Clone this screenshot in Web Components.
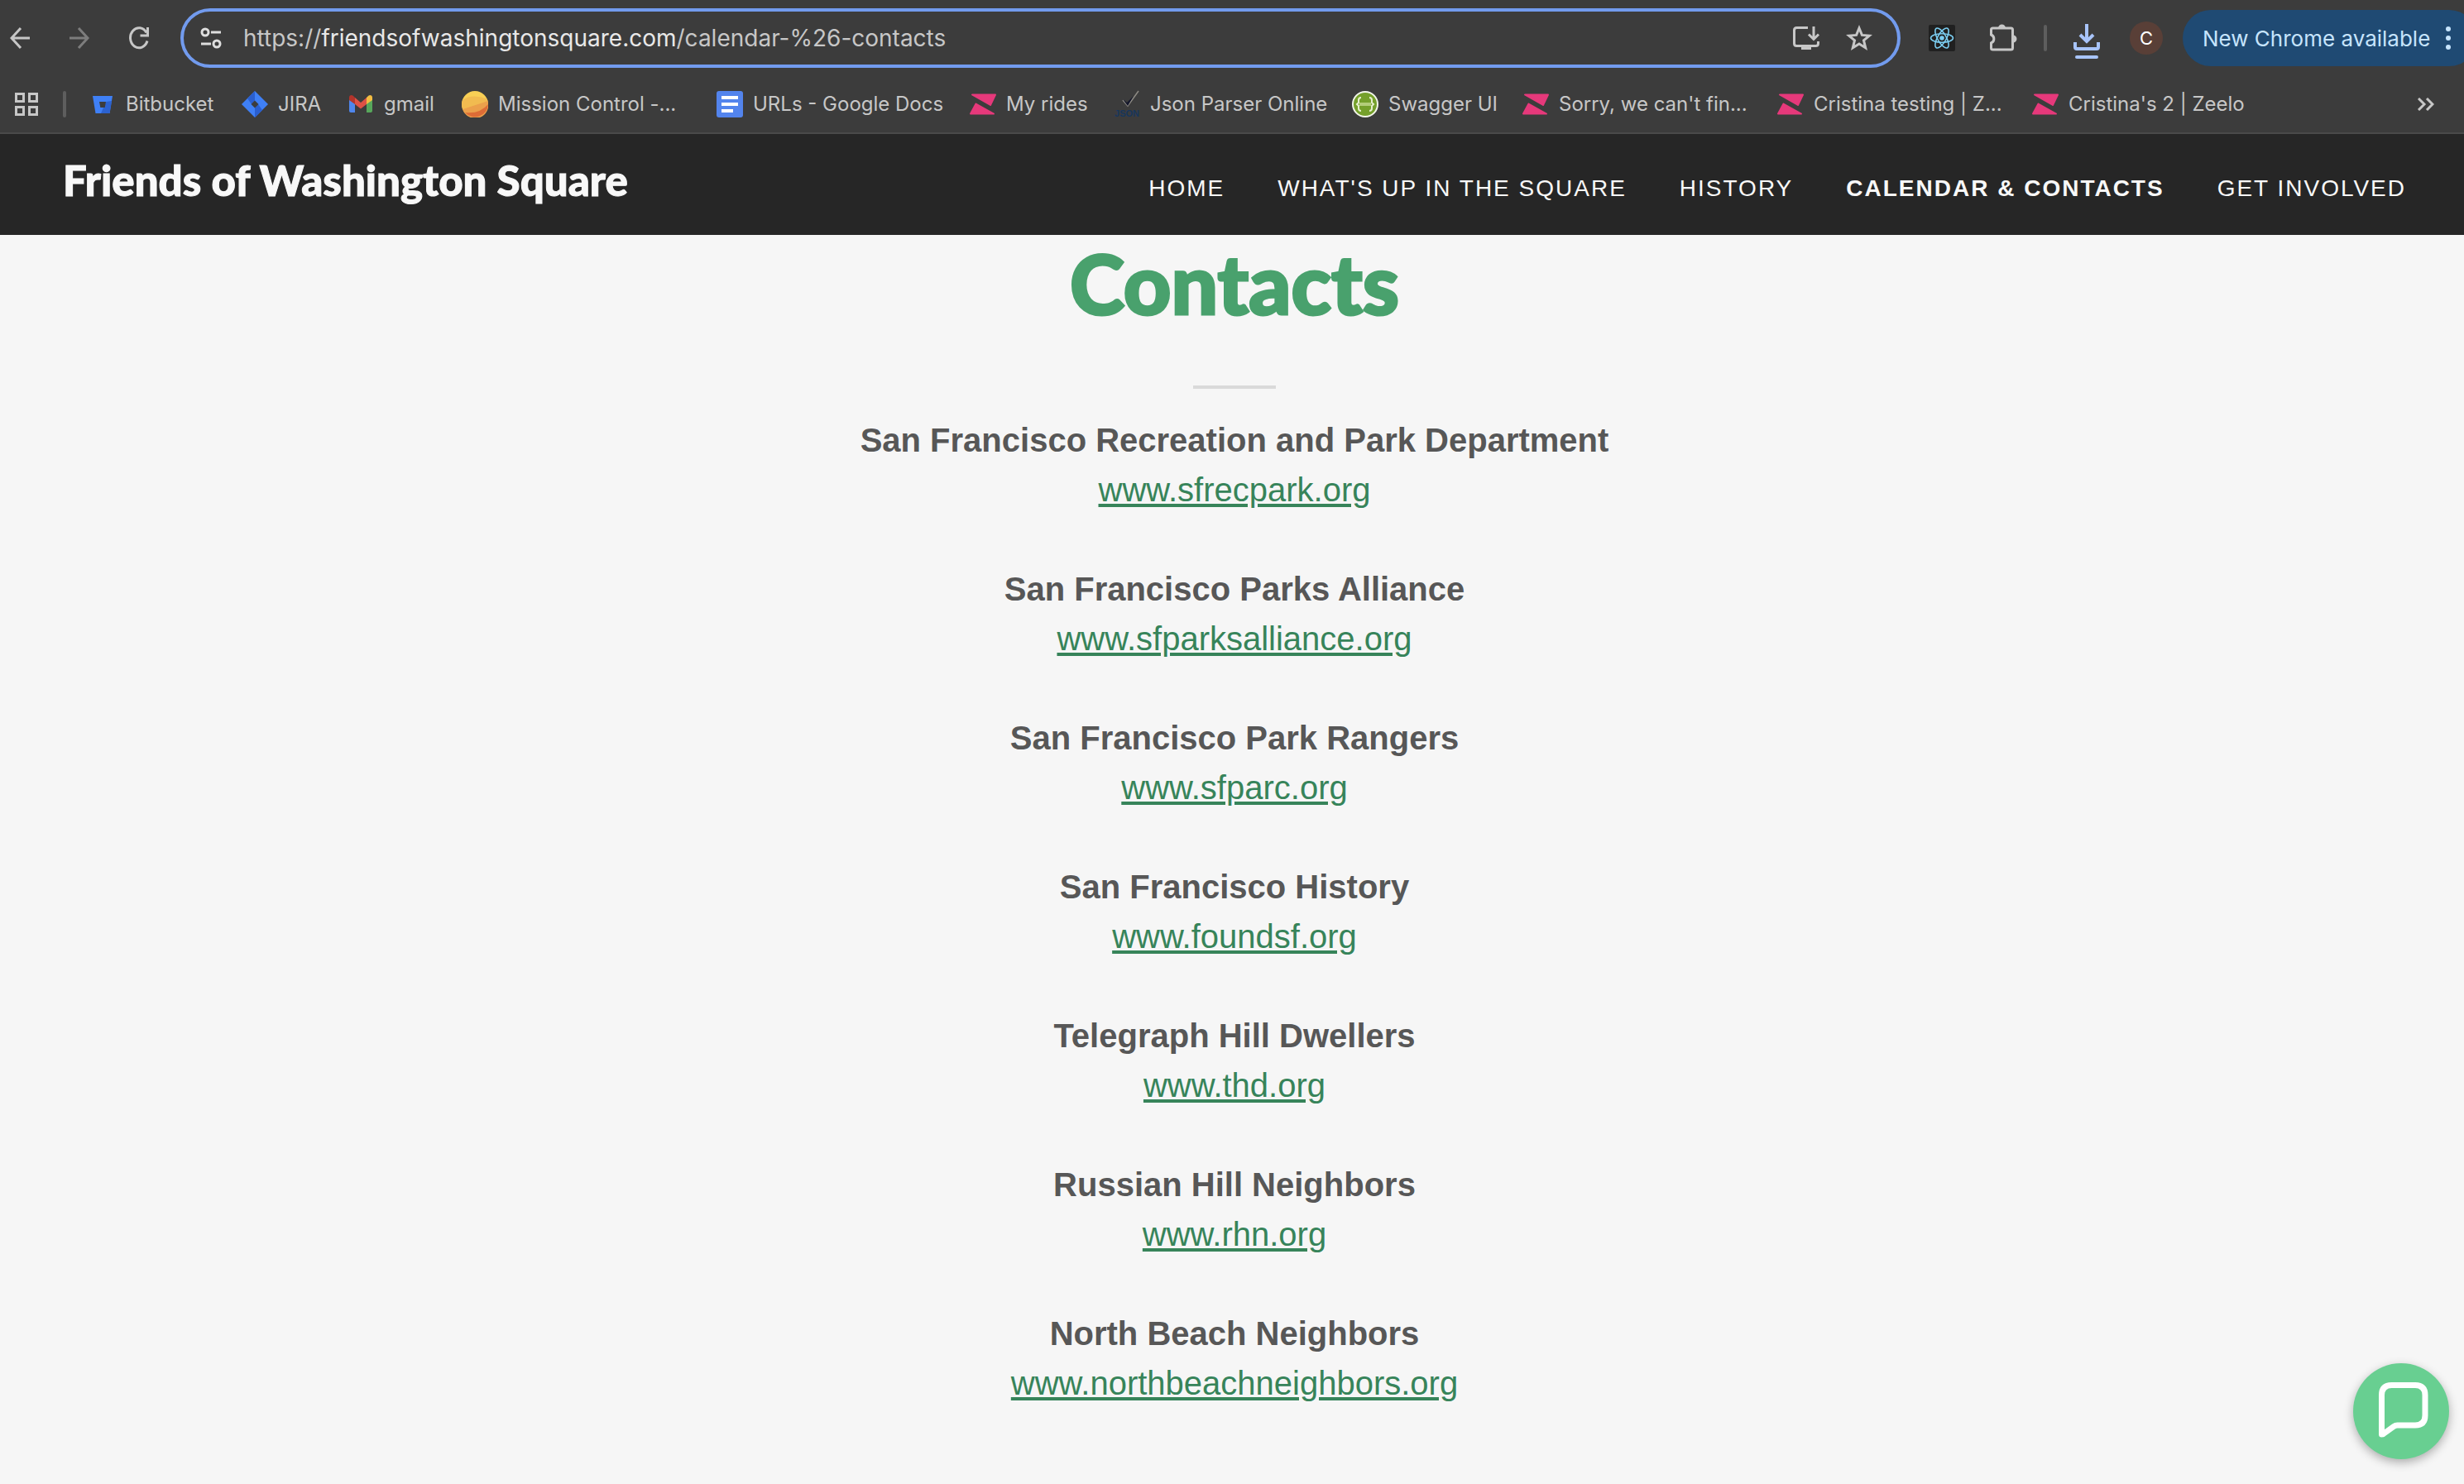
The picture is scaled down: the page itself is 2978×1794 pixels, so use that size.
<!DOCTYPE html>
<html lang="en">
<head>
<meta charset="utf-8">
<title>Calendar &amp; Contacts | Friends of Washington Square</title>
<style>
html, body { margin: 0; background: #f6f6f6; }
body { min-height: 100vh; overflow-x: hidden; font-family: "Liberation Sans", Arial, sans-serif; }
</style>
</head>
<body>
<browser-chrome></browser-chrome>
<site-header></site-header>
<contact-section>
  <contact-entry name="San Francisco Recreation and Park Department" site="www.sfrecpark.org"></contact-entry>
  <contact-entry name="San Francisco Parks Alliance" site="www.sfparksalliance.org"></contact-entry>
  <contact-entry name="San Francisco Park Rangers" site="www.sfparc.org"></contact-entry>
  <contact-entry name="San Francisco History" site="www.foundsf.org"></contact-entry>
  <contact-entry name="Telegraph Hill Dwellers" site="www.thd.org"></contact-entry>
  <contact-entry name="Russian Hill Neighbors" site="www.rhn.org"></contact-entry>
  <contact-entry name="North Beach Neighbors" site="www.northbeachneighbors.org"></contact-entry>
</contact-section>
<chat-launcher></chat-launcher>
<script>
const ICONS = {
  back: '<svg viewBox="0 0 24 28" width="24" height="28" fill="none" stroke="#c7c7c7" stroke-width="3"><path d="M24 14H2M13 2 2 14l11 12"/></svg>',
  forward: '<svg viewBox="0 0 24 28" width="24" height="28" fill="none" stroke="#7d7d7d" stroke-width="3"><path d="M0 14h22M11 2l11 12-11 12"/></svg>',
  reload: '<svg viewBox="0 0 24 28" width="24" height="28" fill="none" stroke="#c7c7c7" stroke-width="3"><path d="M22 17.500A10.500 12 0 1 1 21 7.500M22.500 1v10h-9"/></svg>',
  tune: '<svg viewBox="0 0 26 28" width="26" height="28" fill="none" stroke="#dedede" stroke-width="3"><circle cx="6" cy="7" r="4"/><circle cx="20" cy="21" r="4"/><path d="M13 7h12M1 21h12"/></svg>',
  install: '<svg viewBox="0 0 32 32" width="32" height="32" fill="none" stroke="#c7c7c7" stroke-width="3"><path d="M18 3.500H4.500q-3 0-3 3v16q0 3 3 3h23q3 0 3-3V20M25 2v15M19 11.500l6 6 6-6"/><path d="M10 26h12v4H10z" fill="#c7c7c7" stroke="none"/></svg>',
  star: '<svg viewBox="0 0 32 32" width="32" height="32" fill="none" stroke="#c7c7c7" stroke-width="3"><path d="M16 4l3.400 8.400 9 .7-6.900 5.800 2.200 8.900L16 23l-7.700 4.800 2.200-8.900-6.900-5.800 9-.7z"/></svg>',
  react: '<svg viewBox="0 0 32 32" width="32" height="32"><rect width="32" height="32" rx="2" fill="#202020"/><g fill="none" stroke="#7bcdf0" stroke-width="1.600"><ellipse cx="16" cy="16" rx="13.500" ry="5.200"/><ellipse cx="16" cy="16" rx="13.500" ry="5.200" transform="rotate(60 16 16)"/><ellipse cx="16" cy="16" rx="13.500" ry="5.200" transform="rotate(120 16 16)"/></g><circle cx="16" cy="16" r="2.800" fill="#7bcdf0"/></svg>',
  puzzle: '<svg viewBox="0 0 34 34" width="34" height="34"><path d="M4.500 5h22q2 0 2 2v22q0 2-2 2h-22q-2 0-2-2v-6a5.400 5.400 0 0 0 0-10V7q0-2 2-2z" fill="none" stroke="#c7c7c7" stroke-width="3"/><path d="M11 5a4.500 4.500 0 0 1 9 0zM29 13.500a4.500 4.500 0 0 1 0 9z" fill="#c7c7c7"/></svg>',
  download: '<svg viewBox="0 0 32 44" width="32" height="44" fill="none" stroke="#a8c4fa" stroke-width="4"><path d="M16 0v21M8 13l8 8 8-8M2 22v6q0 2 2 2h24q2 0 2-2v-6"/><path d="M4 40h24" stroke-linecap="round"/></svg>',
  dots: '<svg viewBox="0 0 6 28" width="6" height="28" fill="#c6e4fd"><circle cx="3" cy="3" r="3"/><circle cx="3" cy="14" r="3"/><circle cx="3" cy="25" r="3"/></svg>',
  apps: '<svg viewBox="0 0 28 28" width="28" height="28" fill="none" stroke="#c7c7c7" stroke-width="3"><path d="M1.500 1.500h9v9h-9zM17.500 1.500h9v9h-9zM1.500 17.500h9v9h-9zM17.500 17.500h9v9h-9z"/></svg>',
  more: '<svg viewBox="0 0 20 16" width="20" height="16" fill="none" stroke="#c7c7c7" stroke-width="3"><path d="M1 1l7 7-7 7M11 1l7 7-7 7"/></svg>',
  bitbucket: '<svg viewBox="0 0 32 32" width="32" height="32"><path d="M4 6h24l-3.500 21H7.500z" fill="#3f80f6"/><path d="M20 13l7-1-2.500 15H14z" fill="#2c62d0"/><path d="M12 13h8l-1.300 7h-5.400z" fill="#3c3c3c"/></svg>',
  jira: '<svg viewBox="0 0 32 32" width="32" height="32"><path d="M16 0l16 16-16 16L0 16z" fill="#3f80f6"/><path d="M16 0v12l-4 4-5-7zM16 32V20l4-4 5 7z" fill="#2a5fd0"/><path d="M16 11.500l4.500 4.500-4.500 4.500-4.500-4.500z" fill="#3c3c3c"/></svg>',
  gmail: '<svg viewBox="0 0 32 32" width="32" height="32"><path d="M2 9v15q0 2 2 2h5V14z" fill="#4f86ec"/><path d="M23 14v12h5q2 0 2-2V9z" fill="#57a75b"/><path d="M23 8v8l7-5V8q0-3-3-3-1.500 0-4 3z" fill="#f3bd42"/><path d="M9 8l7 6 7-6v8l-7 5.500L9 16z" fill="#de5145"/><path d="M2 8q0-3 3-3 1.500 0 4 3v8l-7-5z" fill="#b3342b"/></svg>',
  mission: '<svg viewBox="0 0 32 32" width="32" height="32"><circle cx="16" cy="16" r="16" fill="#f8cf55"/><path d="M1 11Q12 3 30.500 9.500L31.500 12 1 22Q-1 16 1 11z" fill="#f1bb50"/><path d="M31.500 12A16 16 0 0 1 1 22z" fill="#eba04b"/><path d="M32 16A16 16 0 0 1 4 26Q22 28 32 16z" fill="#dd6c36"/></svg>',
  docs: '<svg viewBox="0 0 32 32" width="32" height="32"><rect width="32" height="32" rx="3" fill="#5384ed"/><path d="M6 8h20M6 16h20M6 24h14" stroke="#fff" stroke-width="4"/></svg>',
  zeelo: '<svg viewBox="0 0 32 32" width="32" height="32" fill="#e6397b" stroke="#e6397b" stroke-width="2" stroke-linejoin="round"><path d="M3 4.500h28L25 17zM7.500 15.500L29 27.500H1z"/></svg>',
  json: '<svg viewBox="0 0 32 32" width="32" height="32" overflow="visible"><path d="M11 11l6 7L30 0" fill="none" stroke="#8d8a84" stroke-width="1.500"/><path d="M11 10l5 4 8-8-7 12z" fill="#14172c"/><text x="16" y="31" text-anchor="middle" font-family="Liberation Sans, sans-serif" font-weight="700" font-size="11" fill="#17365c">JSON</text></svg>',
  swagger: '<svg viewBox="0 0 32 32" width="32" height="32"><circle cx="16" cy="16" r="15" fill="#75a02b" stroke="#f2f5ea" stroke-width="2"/><path d="M11 8Q8 8 8 11v3l-2 2 2 2v3q0 3 3 3M21 8q3 0 3 3v3l2 2-2 2v3q0 3-3 3" fill="none" stroke="#e6efce" stroke-width="2"/><path d="M9 16h14" stroke="#b3cd79" stroke-width="4"/></svg>'
};

class BrowserChrome extends HTMLElement {
  connectedCallback() {
    this.attachShadow({ mode: 'open' }).innerHTML = `
<style>
:host { display: block; background: #3c3c3c; border-bottom: 2px solid #4a4a4a; height: 160px; overflow: hidden; font-family: Inter, sans-serif; color: #c7c7c7; }
svg { display: block; flex: none; }
button { all: unset; display: flex; align-items: center; justify-content: center; flex: none; box-sizing: border-box; }
.bar { display: flex; align-items: center; height: 92px; }
.nav { display: flex; gap: 48px; padding: 0 38px 0 12px; }
.omnibox { flex: 1; display: flex; align-items: center; box-sizing: border-box; height: 72px; border: 4px solid #729bee; border-radius: 36px; padding: 0 30px 0 20px; }
.url { flex: 1; margin-left: 26px; font-size: 28px; line-height: 36px; white-space: nowrap; outline: none; }
.url b { font-weight: 400; color: #e8e8e8; }
.star { margin-left: 32px; }
.tools { display: flex; align-items: center; padding-left: 34px; flex: none; }
.rule { width: 4px; height: 32px; border-radius: 2px; background: #5e5e5e; flex: none; }
.ext { margin: 0 32px 0 41px; }
.dl { margin: 10px 0 0 32px; }
.avatar { width: 40px; height: 40px; border-radius: 50%; background: #593f37; color: #fff; font-size: 22px; margin: 0 24px 0 36px; }
.update { height: 68px; width: 356px; margin-right: -16px; padding: 0 32px 0 24px; border-radius: 34px; background: #1f4a73; color: #c6e4fd; font-size: 26px; justify-content: space-between; white-space: nowrap; }
.marks { display: flex; align-items: center; height: 68px; padding: 0 36px 0 18px; }
.marks .rule { margin: 0 28px 0 30px; }
</style>
<div class="bar">
  <div class="nav"><button aria-label="Back">${ICONS.back}</button><button aria-label="Forward">${ICONS.forward}</button><button aria-label="Reload">${ICONS.reload}</button></div>
  <div class="omnibox">
    <button aria-label="Site information">${ICONS.tune}</button>
    <div class="url" role="textbox" aria-label="Address" contenteditable="true" spellcheck="false">https://<b>friendsofwashingtonsquare.com</b>/calendar-%26-contacts</div>
    <button aria-label="Install">${ICONS.install}</button><button class="star" aria-label="Bookmark">${ICONS.star}</button>
  </div>
  <div class="tools">
    <button aria-label="React">${ICONS.react}</button>
    <button class="ext" aria-label="Extensions">${ICONS.puzzle}</button>
    <span class="rule"></span>
    <button class="dl" aria-label="Downloads">${ICONS.download}</button>
    <button class="avatar">C</button>
    <button class="update"><span>New Chrome available</span>${ICONS.dots}</button>
  </div>
</div>
<div class="marks">
  <button aria-label="Apps">${ICONS.apps}</button>
  <span class="rule"></span>
  <bookmark-list></bookmark-list>
  <button aria-label="More bookmarks">${ICONS.more}</button>
</div>`;
  }
}

class BookmarkList extends HTMLElement {
  connectedCallback() {
    const items = [
      ['bitbucket', 'Bitbucket', 152], ['jira', 'JIRA', 96], ['gmail', 'gmail', 106],
      ['mission', 'Mission Control -...', 276], ['docs', 'URLs - Google Docs', 274],
      ['zeelo', 'My rides', 142], ['json', 'Json Parser Online', 256], ['swagger', 'Swagger UI', 174],
      ['zeelo', "Sorry, we can't fin...", 276], ['zeelo', 'Cristina testing | Z...', 276],
      ['zeelo', "Cristina's 2 | Zeelo", 256]
    ];
    this.attachShadow({ mode: 'open' }).innerHTML = `
<style>
:host { display: flex; flex: 1; gap: 32px; min-width: 0; }
a { display: flex; align-items: center; gap: 12px; flex: none; color: #c7c7c7; text-decoration: none; font-size: 24px; line-height: 32px; white-space: nowrap; }
svg { display: block; flex: none; }
</style>` + items.map(([icon, label, width]) =>
      `<a href="#" style="width:${width}px">${ICONS[icon]}<span>${label}</span></a>`).join('');
  }
}

class SiteHeader extends HTMLElement {
  connectedCallback() {
    this.attachShadow({ mode: 'open' }).innerHTML = `
<style>
:host { display: flex; justify-content: space-between; box-sizing: border-box; height: 122px; padding: 0 70px 0 76px; background: #262626; color: #f8f8f8; }
a { color: inherit; text-decoration: none; white-space: nowrap; }
.brand { font: 900 51px/60px Lato, sans-serif; padding-top: 26px; -webkit-text-stroke: 1px currentColor; }
nav { display: flex; gap: 64px; padding-top: 48px; font-size: 28px; line-height: 36px; letter-spacing: 2px; }
[aria-current] { font-weight: 700; }
</style>
<a class="brand" href="#">Friends of Washington Square</a>
<nav>
  <a href="#">HOME</a><a href="#">WHAT'S UP IN THE SQUARE</a><a href="#">HISTORY</a>
  <a href="#" aria-current="page">CALENDAR &amp; CONTACTS</a><a href="#">GET INVOLVED</a>
</nav>`;
  }
}

class ContactSection extends HTMLElement {
  connectedCallback() {
    this.attachShadow({ mode: 'open' }).innerHTML = `
<style>
:host { display: flex; flex-direction: column; align-items: center; padding-left: 6px; text-align: center; }
h1 { margin: 0; font: 900 100px/114px Lato, sans-serif; color: #49a16d; -webkit-text-stroke: 3px currentColor; }
hr { width: 100px; height: 4px; margin: 68px 0 32px; border: 0; background: #dadada; }
.list { display: flex; flex-direction: column; gap: 60px; }
</style>
<h1>Contacts</h1><hr><div class="list"><slot></slot></div>`;
  }
}

class ContactEntry extends HTMLElement {
  connectedCallback() {
    const name = this.getAttribute('name'), site = this.getAttribute('site');
    this.attachShadow({ mode: 'open' }).innerHTML = `
<style>
:host { display: flex; flex-direction: column; align-items: center; font-size: 40px; line-height: 60px; }
strong { color: #575757; }
a { color: #37845a; text-underline-offset: 3px; text-decoration-thickness: 4px; }
</style>
<strong>${name}</strong><a href="http://${site}">${site}</a>`;
  }
}

class ChatLauncher extends HTMLElement {
  connectedCallback() {
    this.attachShadow({ mode: 'open' }).innerHTML = `
<style>
:host { display: block; position: fixed; right: 18px; bottom: 30px; }
button { display: flex; align-items: center; justify-content: center; width: 116px; height: 116px; padding: 0; border: 0; border-radius: 50%; background: #68cf91; box-shadow: 0 4px 12px rgba(0,0,0,.3); }
</style>
<button aria-label="Open chat"><svg viewBox="0 0 116 116" width="116" height="116" fill="none" stroke="#fff" stroke-width="7" stroke-linejoin="round"><path d="M34.500 86V38.500q0-12 12-12h28.500q12 0 12 12V63q0 12-12 12H53.500Q51 75 49 76.500L36.500 85.500Q34.500 86.500 34.500 84z"/></svg></button>`;
  }
}

customElements.define('bookmark-list', BookmarkList);
customElements.define('browser-chrome', BrowserChrome);
customElements.define('site-header', SiteHeader);
customElements.define('contact-entry', ContactEntry);
customElements.define('contact-section', ContactSection);
customElements.define('chat-launcher', ChatLauncher);
</script>
</body>
</html>
